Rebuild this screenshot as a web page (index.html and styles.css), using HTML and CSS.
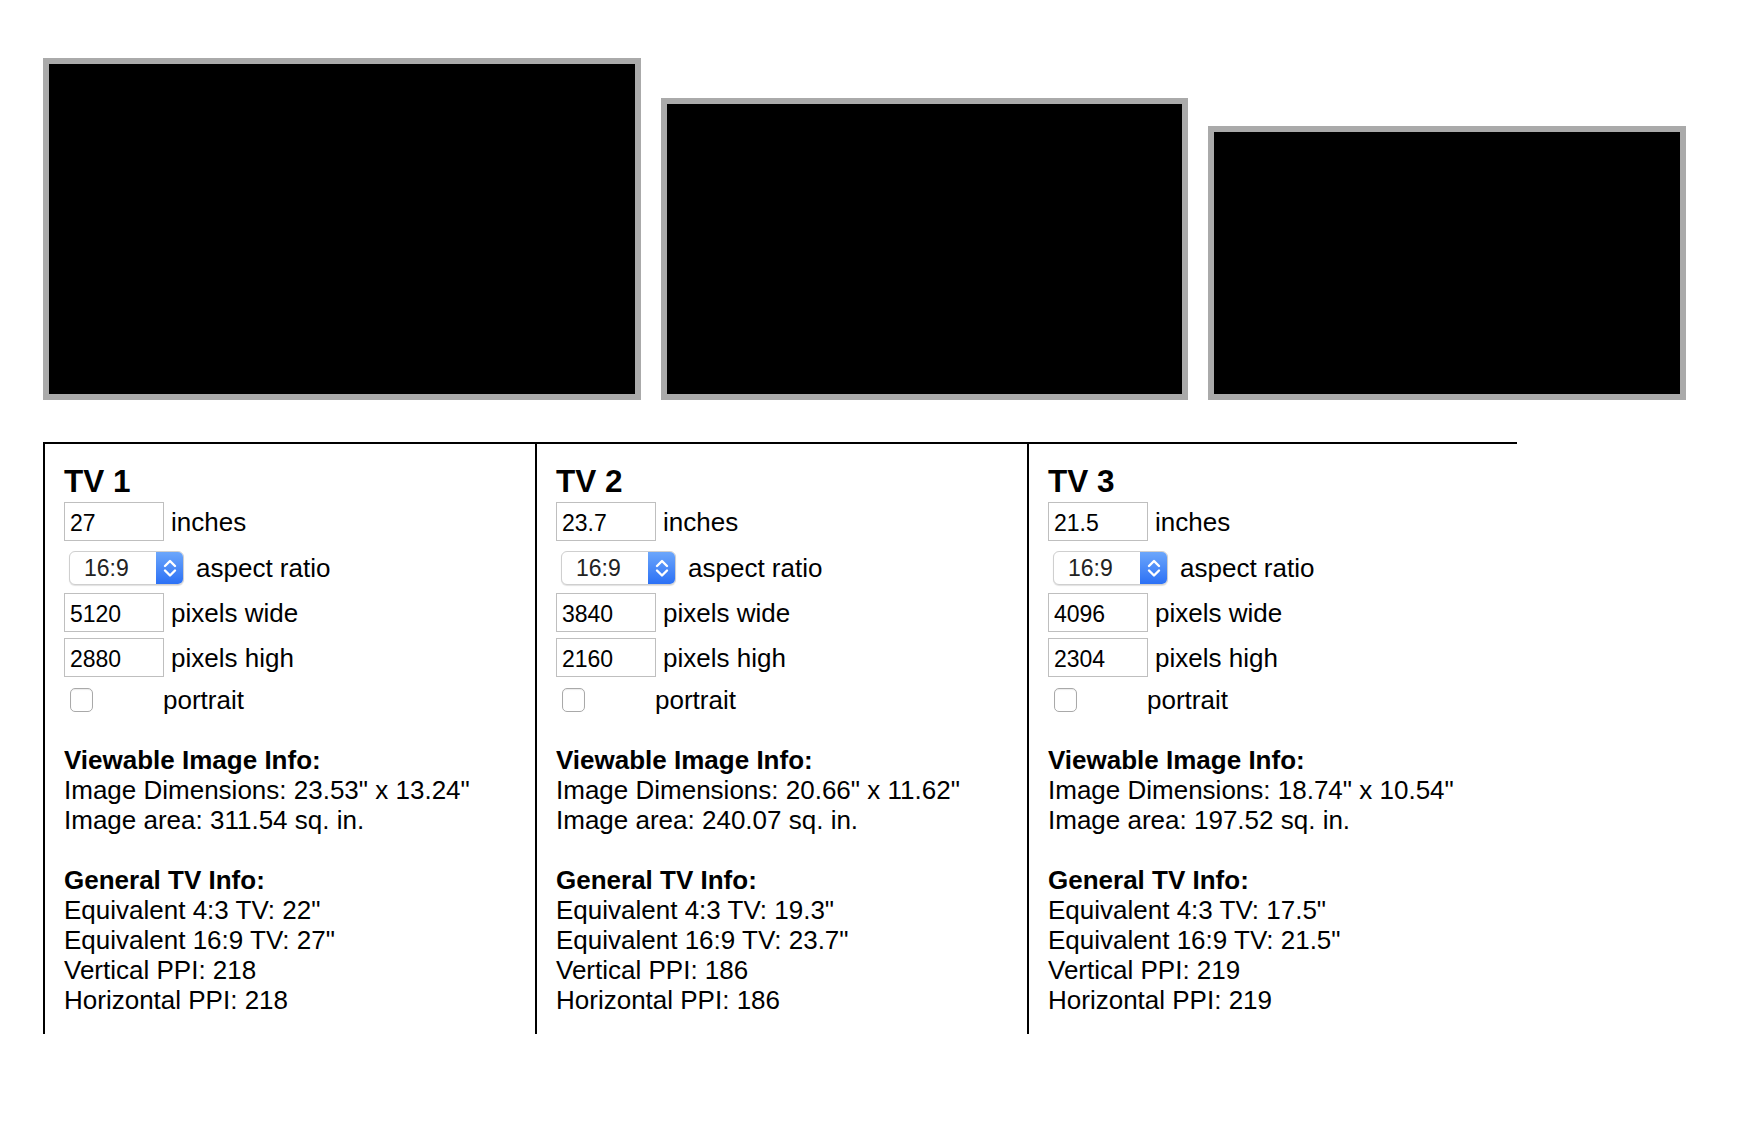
FILE: index.html
```html
<!DOCTYPE html>
<html lang="en">
<head>
<meta charset="utf-8">
<title>TV Size Comparison</title>
<link rel="stylesheet" href="styles.css">
</head>
<body>
<div class="screens">
  <div class="tv tv1"></div>
  <div class="tv tv2"></div>
  <div class="tv tv3"></div>
</div>

<div class="panels">
  <div class="panel">
    <h3 class="title">TV 1</h3>
    <div class="row r-in"><input class="field" type="text" value="27"><span class="lbl">inches</span></div>
    <div class="row r-sel"><div class="select"><span class="sel-text">16:9</span><span class="sel-btn"><svg viewBox="0 0 28 34" width="28" height="34"><polyline points="9,15 14,10 19,15" /><polyline points="9,19.5 14,24.5 19,19.5" /></svg></span></div><span class="lbl lbl-sel">aspect ratio</span></div>
    <div class="row r-w"><input class="field" type="text" value="5120"><span class="lbl">pixels wide</span></div>
    <div class="row r-h"><input class="field" type="text" value="2880"><span class="lbl">pixels high</span></div>
    <div class="row r-chk"><span class="chk-cell"><span class="chk"></span></span><span class="lbl-chk">portrait</span></div>
    <div class="info">
      <p><b>Viewable Image Info:</b><br>Image Dimensions: 23.53" x 13.24"<br>Image area: 311.54 sq. in.</p>
      <p><b>General TV Info:</b><br>Equivalent 4:3 TV: 22"<br>Equivalent 16:9 TV: 27"<br>Vertical PPI: 218<br>Horizontal PPI: 218</p>
    </div>
  </div>

  <div class="panel">
    <h3 class="title">TV 2</h3>
    <div class="row r-in"><input class="field" type="text" value="23.7"><span class="lbl">inches</span></div>
    <div class="row r-sel"><div class="select"><span class="sel-text">16:9</span><span class="sel-btn"><svg viewBox="0 0 28 34" width="28" height="34"><polyline points="9,15 14,10 19,15" /><polyline points="9,19.5 14,24.5 19,19.5" /></svg></span></div><span class="lbl lbl-sel">aspect ratio</span></div>
    <div class="row r-w"><input class="field" type="text" value="3840"><span class="lbl">pixels wide</span></div>
    <div class="row r-h"><input class="field" type="text" value="2160"><span class="lbl">pixels high</span></div>
    <div class="row r-chk"><span class="chk-cell"><span class="chk"></span></span><span class="lbl-chk">portrait</span></div>
    <div class="info">
      <p><b>Viewable Image Info:</b><br>Image Dimensions: 20.66" x 11.62"<br>Image area: 240.07 sq. in.</p>
      <p><b>General TV Info:</b><br>Equivalent 4:3 TV: 19.3"<br>Equivalent 16:9 TV: 23.7"<br>Vertical PPI: 186<br>Horizontal PPI: 186</p>
    </div>
  </div>

  <div class="panel">
    <h3 class="title">TV 3</h3>
    <div class="row r-in"><input class="field" type="text" value="21.5"><span class="lbl">inches</span></div>
    <div class="row r-sel"><div class="select"><span class="sel-text">16:9</span><span class="sel-btn"><svg viewBox="0 0 28 34" width="28" height="34"><polyline points="9,15 14,10 19,15" /><polyline points="9,19.5 14,24.5 19,19.5" /></svg></span></div><span class="lbl lbl-sel">aspect ratio</span></div>
    <div class="row r-w"><input class="field" type="text" value="4096"><span class="lbl">pixels wide</span></div>
    <div class="row r-h"><input class="field" type="text" value="2304"><span class="lbl">pixels high</span></div>
    <div class="row r-chk"><span class="chk-cell"><span class="chk"></span></span><span class="lbl-chk">portrait</span></div>
    <div class="info">
      <p><b>Viewable Image Info:</b><br>Image Dimensions: 18.74" x 10.54"<br>Image area: 197.52 sq. in.</p>
      <p><b>General TV Info:</b><br>Equivalent 4:3 TV: 17.5"<br>Equivalent 16:9 TV: 21.5"<br>Vertical PPI: 219<br>Horizontal PPI: 219</p>
    </div>
  </div>
</div>
</body>
</html>
```

FILE: styles.css
```css
html, body {
  margin: 0;
  padding: 0;
  background: #fff;
}

body {
  font-family: "Liberation Sans", Arial, Helvetica, sans-serif;
  font-size: 26px;
  color: #000;
}

.screens {
  display: flex;
  align-items: flex-end;
  gap: 20px;
  padding: 58px 0 0 43px;
}

.tv {
  background: #000;
  border: 6px solid #aaa;
  flex: none;
}

.tv1 { width: 586px; height: 330px; }
.tv2 { width: 515px; height: 290px; }
.tv3 { width: 466px; height: 262px; }

.panels {
  display: flex;
  margin: 42px 0 0 43px;
}

.panel {
  box-sizing: border-box;
  width: 492px;
  height: 592px;
  border-top: 2px solid #000;
  border-left: 2px solid #000;
  padding: 0 19px;
}

.panel:last-child {
  width: 490px;
}

.title {
  margin: 19px 0 0 0;
  font-size: 31.5px;
  line-height: 36px;
  font-weight: bold;
}

.row {
  display: flex;
  align-items: center;
  line-height: 30px;
}

.r-in { margin-top: 3px; }
.r-sel { margin-top: 10px; }
.r-w { margin-top: 8px; }
.r-h { margin-top: 6px; }
.r-chk { margin-top: 8px; }

.field {
  box-sizing: border-box;
  width: 100px;
  height: 39px;
  margin: 0;
  padding: 3px 5px 0 5px;
  border: 1px solid #bfbfbf;
  border-radius: 0;
  font-family: "Liberation Sans", Arial, Helvetica, sans-serif;
  font-size: 23px;
  color: #000;
  background: #fff;
  outline: none;
}

.lbl {
  margin-left: 7px;
}

.lbl-sel {
  margin-left: 12px;
}

.select {
  box-sizing: border-box;
  display: flex;
  width: 115px;
  height: 34px;
  margin-left: 5px;
  border: 1px solid #cfcfcf;
  border-radius: 6px;
  background: #fff;
  box-shadow: 0 1px 1px rgba(0, 0, 0, 0.12);
  overflow: hidden;
}

.sel-text {
  flex: 1;
  padding-left: 14px;
  font-size: 23px;
  line-height: 32px;
  color: #222;
}

.sel-btn {
  width: 28px;
  height: 34px;
  margin: -1px -1px -1px 0;
  background: linear-gradient(#6ea8fb, #2a6ff5);
  border-radius: 0 6px 6px 0;
  display: flex;
}

.sel-btn polyline {
  fill: none;
  stroke: #fff;
  stroke-width: 2.4;
  stroke-linecap: round;
  stroke-linejoin: round;
}

.chk-cell {
  width: 99px;
  display: flex;
  align-items: center;
}

.chk {
  box-sizing: border-box;
  width: 23px;
  height: 24px;
  margin-left: 6px;
  border: 1px solid #a9a9a9;
  border-radius: 5px;
  background: #fff;
  box-shadow: inset 0 1px 1px rgba(0, 0, 0, 0.08);
}

.info {
  margin-top: 30px;
  line-height: 30px;
}

.info p {
  margin: 0 0 30px 0;
}
```
